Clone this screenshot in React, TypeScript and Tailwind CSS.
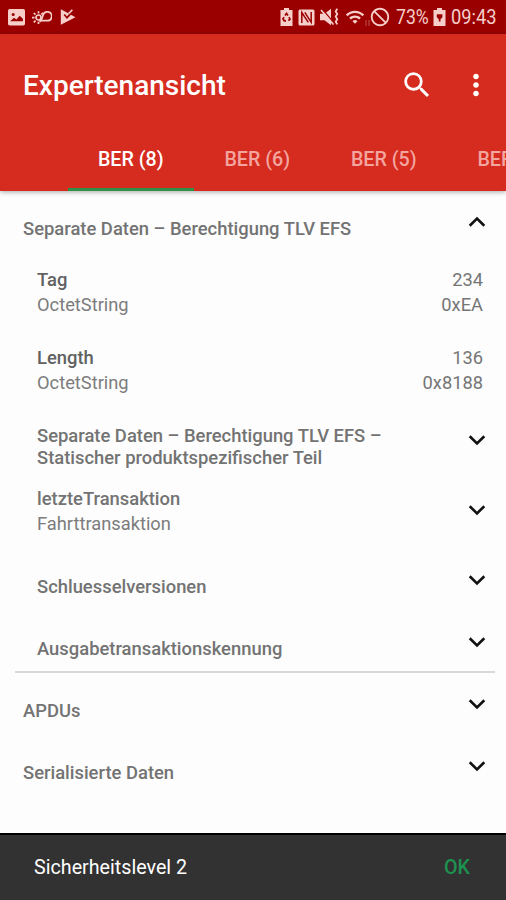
import { useState } from "react";
import { MdSearch, MdMoreVert, MdWifi, MdDoNotDisturbAlt } from "react-icons/md";

type Row = {
  title: string;
  subtitle?: string;
  values?: string[];
};

const tabs = ["BER (8)", "BER (6)", "BER (5)", "BER (4)"];

const fields: Row[] = [
  { title: "Tag", subtitle: "OctetString", values: ["234", "0xEA"] },
  { title: "Length", subtitle: "OctetString", values: ["136", "0x8188"] },
];

const children: Row[] = [
  { title: "Separate Daten – Berechtigung TLV EFS – Statischer produktspezifischer Teil" },
  { title: "letzteTransaktion", subtitle: "Fahrttransaktion" },
  { title: "Schluesselversionen" },
  { title: "Ausgabetransaktionskennung" },
];

const sections: Row[] = [{ title: "APDUs" }, { title: "Serialisierte Daten" }];

function Chevron({ up = false }: { up?: boolean }) {
  return (
    <svg viewBox="0 0 18 12" className={up ? "mb-px h-3 w-[18px] shrink-0 rotate-180" : "h-3 w-[18px] shrink-0"} fill="none" stroke="#111" strokeWidth="2.6">
      <path d="M1.7 2.2 9 9.4l7.3-7.2" />
    </svg>
  );
}

function StatusBar() {
  return (
    <div className="flex h-[34px] shrink-0 items-center bg-[#9b0000] text-[#f6cfcb]">
      <div className="flex flex-1 items-center pl-2">
        {/* picture */}
        <svg viewBox="0 0 17 17" className="size-[17px]">
          <rect width="17" height="16.5" rx="1.8" fill="currentColor" />
          <circle cx="5.2" cy="5.6" r="1.5" fill="#9b0000" />
          <path d="M2.2 12.3 6 8.8l2.4 1.8 3.3-3.8 3.2 3v2.5z" fill="#9b0000" />
        </svg>
        {/* weather */}
        <svg viewBox="0 0 20 16" className="ml-[7px] h-4 w-5" fill="none" stroke="currentColor" strokeWidth="1.7">
          <circle cx="6.5" cy="8.5" r="2.5" />
          <path d="M6.5 2.2v2.3M1.8 4l1.7 1.7M0 8.7h2.5M1.8 13.4l1.7-1.7M6.5 15v-2.3M11 3.8 9.3 5.5" />
          <path d="M9 11.7h6.3a4.4 4.4 0 1 0-4.3-5.5c-.5 2.3-1.3 4-3.3 6.8" />
        </svg>
        {/* play check */}
        <svg viewBox="0 0 16 16" className="ml-2 size-4">
          <path d="M.8.3 15.5 8.2.8 15.8z" fill="currentColor" />
          <path d="M4.2 5.5 7 8.7l5.6-6" fill="none" stroke="#9b0000" strokeWidth="1.7" />
          <path d="m8.6 4.6 3.8-3.8" fill="none" stroke="currentColor" strokeWidth="1.6" />
        </svg>
      </div>
      <div className="flex items-center pr-2">
        {/* battery saver */}
        <svg viewBox="0 0 13 18" className="h-[18px] w-[13px]">
          <path d="M4 0h5v2h3.5v16H.5V2H4z" fill="currentColor" />
          <path d="m5 7.4 1.5-2 1.5 2M9 9.2l1 2-1.6 1.4M6 12.8H4.3L3 11l1-1.8" fill="none" stroke="#9b0000" strokeWidth="1.7" />
        </svg>
        {/* nfc */}
        <svg viewBox="0 0 17 17" className="ml-[5px] size-[17px]">
          <rect x=".5" y=".5" width="16" height="16" rx="1.5" fill="currentColor" />
          <path d="M3.8 14V3.5l6.5 9.8M6.8 3.3l6.4 10V3" fill="none" stroke="#9b0000" strokeWidth="1.5" />
        </svg>
        {/* vibrate, muted */}
        <svg viewBox="0 0 19 18" className="ml-[5px] h-[18px] w-[19px]">
          <path d="M0 5.8h4.5L11 .8v16.4l-6.5-5H0z" fill="currentColor" />
          <path d="m2.2 1 11.3 13.5" stroke="#9b0000" strokeWidth="1.2" />
          <path d="m1 2 12.5 14.5" stroke="currentColor" strokeWidth="1.7" />
          <path d="M17.3.8 15.7 3.4 17.3 6l-1.6 2.6 1.6 2.6-1.6 2.6 1.6 2.6" fill="none" stroke="currentColor" strokeWidth="1.8" />
        </svg>
        <MdWifi className="ml-1.5 size-5" />
        <svg viewBox="0 0 5 8" className="mt-3 h-2 w-[5px] opacity-40" fill="none" stroke="currentColor">
          <path d="M1 1v6M4 1v6" />
        </svg>
        <MdDoNotDisturbAlt className="-ml-px size-[22px] rotate-90" />
        <div className="ml-[5px] w-[33px] text-[21px] leading-none">
          <span className="inline-block origin-left scale-x-[0.84]">73%</span>
        </div>
        {/* battery */}
        <svg viewBox="0 0 13 18" className="ml-1 h-[18px] w-[13px]">
          <path d="M4 0h5v2h3.5v16H.5V2H4z" fill="currentColor" />
          <path d="M3.8 6.2h5.6v3L7.5 11.2v2.3H5.8v-2.3L3.8 9.2z" fill="#9b0000" />
        </svg>
        <div className="ml-[5px] w-[47px] text-[21px] leading-none">
          <span className="inline-block origin-left scale-x-[0.87]">09:43</span>
        </div>
      </div>
    </div>
  );
}

function ExpandRow({ row, nested = false, open = false }: { row: Row; nested?: boolean; open?: boolean }) {
  return (
    <div className={`flex items-center pr-5 ${nested ? "pl-[37px]" : "pl-[23px]"} ${row.subtitle ? "h-[78px]" : "h-[62px]"}`}>
      {row.subtitle ? (
        <div className="flex-1 pt-0.5 leading-[25px]">
          <p className="text-[18.4px] font-medium">{row.title}</p>
          <p className="text-[#7c7c7c]">{row.subtitle}</p>
        </div>
      ) : (
        <p className="flex-1 pt-[13px] pr-16 text-[18.4px] leading-[21.5px] font-medium">{row.title}</p>
      )}
      <Chevron up={open} />
    </div>
  );
}

function FieldRow({ row }: { row: Row }) {
  return (
    <div className="flex h-[78px] items-center justify-between pr-[23px] pl-[37px] leading-[25px]">
      <div>
        <p className="text-[18.4px] font-medium text-[#616161]">{row.title}</p>
        <p className="text-[#7c7c7c]">{row.subtitle}</p>
      </div>
      <div className="text-right text-[#757575]">
        {row.values?.map((v) => <p key={v}>{v}</p>)}
      </div>
    </div>
  );
}

export default function App() {
  const [active, setActive] = useState(0);

  return (
    <div className="flex h-[900px] w-[506px] flex-col overflow-hidden bg-[#fdfdfd] font-[Roboto,sans-serif]">
      <StatusBar />

      <header className="z-10 h-[157px] shrink-0 bg-[#d62b1f] text-white shadow-[0_1px_5px_rgba(0,0,0,0.35)]">
        <div className="flex h-[101px] items-center pr-[13px] pl-[23px]">
          <h1 className="flex-1 pt-[3px] text-[28px] font-medium">Expertenansicht</h1>
          <MdSearch className="mr-[25px] size-[34px]" />
          <MdMoreVert className="size-[34px]" />
        </div>
        <nav className="flex h-14 overflow-hidden pl-[67.5px]">
          {tabs.map((tab, i) => (
            <button
              key={tab}
              onClick={() => setActive(i)}
              className={`w-[126.5px] shrink-0 border-b-[3px] pb-1 text-[19.7px] font-medium ${i === active ? "border-[#2f9148] text-white" : "border-transparent text-[#f3a59f]"}`}
            >
              {tab}
            </button>
          ))}
        </nav>
      </header>

      <main className="flex-1 text-[18.3px] text-[#737373]">
        <ExpandRow row={{ title: "Separate Daten – Berechtigung TLV EFS" }} open />
        {fields.map((row) => <FieldRow key={row.title} row={row} />)}
        {children.map((row) => <ExpandRow key={row.title} row={row} nested />)}
        <div className="-mt-0.5 mr-[11px] ml-[15px] h-0.5 bg-[#d9d9d9]" />
        {sections.map((row) => <ExpandRow key={row.title} row={row} />)}
      </main>

      <footer className="flex h-[67px] shrink-0 items-center justify-between border-t-2 border-black bg-[#323232] pr-9 pl-[34px] text-[19.7px]">
        <span className="text-white">Sicherheitslevel 2</span>
        <button className="font-medium text-[#1d9150]">OK</button>
      </footer>
    </div>
  );
}
